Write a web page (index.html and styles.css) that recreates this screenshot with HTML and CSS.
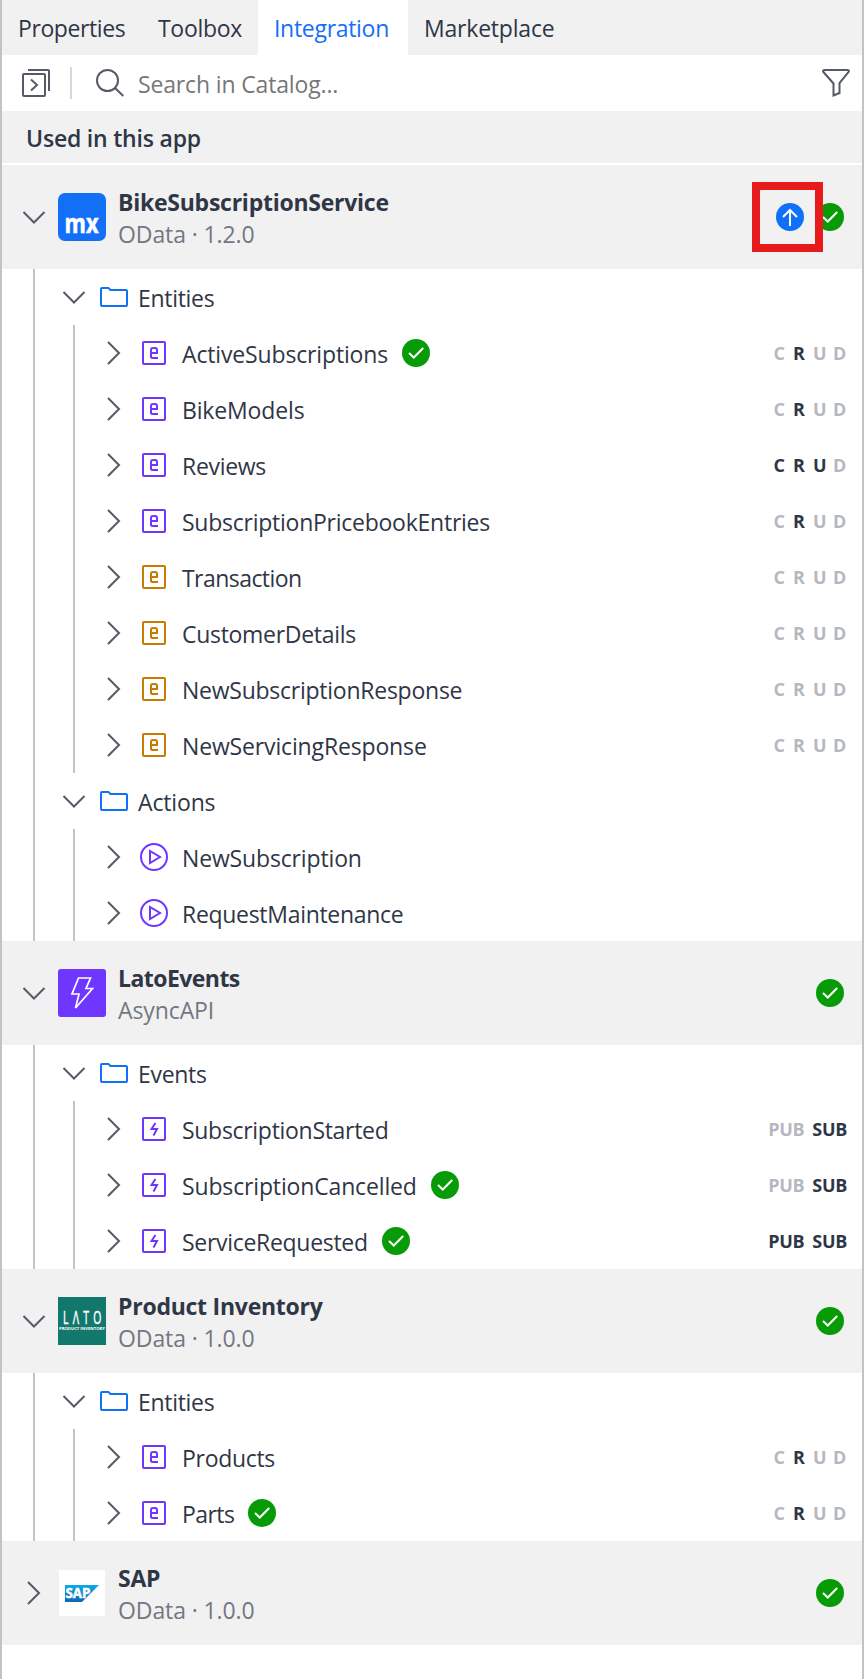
FILE: index.html
```html
<!DOCTYPE html>
<html lang="en">
<head>
<meta charset="utf-8">
<title>Integration</title>
<link rel="stylesheet" href="styles.css">
</head>
<body>
<svg class="defs" aria-hidden="true">
  <symbol id="down" viewBox="0 0 24 28"><path d="M1.500 9 12 19.500 22.500 9"/></symbol>
  <symbol id="right" viewBox="0 0 24 28"><path d="M6 3 17 14 6 25"/></symbol>
  <symbol id="folder" viewBox="0 0 28 28"><path d="M1 6Q1 5 2 5H8.500L10.500 7H26Q27 7 27 8V22Q27 23 26 23H2Q1 23 1 22Z"/></symbol>
  <symbol id="entity" viewBox="0 0 28 28"><rect x="3" y="3" width="22" height="22" rx="1"/><path d="M18 19H12.500Q11 19 11 17.500V11Q11 9 13 9H15Q17 9 17 11V14H11"/></symbol>
  <symbol id="event" viewBox="0 0 28 28"><rect x="3" y="3" width="22" height="22" rx="1"/><path d="M15.500 8 11.500 14H17L13.500 20.500"/></symbol>
  <symbol id="action" viewBox="0 0 28 28"><circle cx="14" cy="14" r="13"/><path d="M10 8V20L20 14Z"/></symbol>
  <symbol id="check" viewBox="0 0 28 28"><circle cx="14" cy="14" r="14" fill="#089b08"/><path d="M7 14 11.800 18.500 21.200 9" fill="none" stroke="#fff" stroke-width="2"/></symbol>
  <symbol id="update" viewBox="0 0 28 28"><circle cx="14" cy="14" r="14" fill="#0f70f8"/><path d="M14 23V7M7 14 14 7 21 14" fill="none" stroke="#fff" stroke-width="2"/></symbol>
</svg>
<div class="panel">
  <nav class="tabs">
    <div class="tab t-properties">Properties</div>
    <div class="tab t-toolbox">Toolbox</div>
    <div class="tab t-integration active">Integration</div>
    <div class="tab t-marketplace">Marketplace</div>
  </nav>
  <div class="toolbar">
    <svg class="i28 line" viewBox="0 0 28 28"><rect x="1" y="5" width="22" height="22" rx="1"/><path d="M6 1H26Q27 1 27 2V22M9 10.500 15 16 9 21.500"/></svg>
    <span class="divider"></span>
    <svg class="i28 line" viewBox="0 0 28 28"><circle cx="11.500" cy="11.500" r="10.500"/><path d="M19 19 27.300 27"/></svg>
    <span class="search">Search in Catalog...</span>
    <svg class="i28 line" viewBox="0 0 28 28"><path d="M2 1H26Q27 1 27 2.500L17.500 14V24L11.500 26.500V14.500L1 2.500Q1 1 2 1Z"/></svg>
  </div>
  <h2 class="section">Used in this app</h2>

  <div class="service">
    <svg class="chev"><use href="#down"/></svg>
    <svg class="logo" viewBox="0 0 48 48"><rect width="48" height="48" rx="7" fill="#146ff8"/><text x="6.500" y="40" font-size="26" font-weight="700" stroke="#fff" stroke-width=".6" textLength="34" lengthAdjust="spacingAndGlyphs">mx</text></svg>
    <div class="info"><div class="name">BikeSubscriptionService</div><div class="kind">OData · 1.2.0</div></div>
    <div class="status"><span class="highlight"><svg class="i28"><use href="#update"/></svg></span><svg class="i28"><use href="#check"/></svg></div>
  </div>
  <div class="branch">
    <div class="row folder"><svg class="chev"><use href="#down"/></svg><svg class="i28 blue"><use href="#folder"/></svg><span class="label">Entities</span></div>
    <div class="items">
      <div class="row"><svg class="chev"><use href="#right"/></svg><svg class="i28 purple"><use href="#entity"/></svg><span class="label wide">ActiveSubscriptions</span><svg class="i28"><use href="#check"/></svg><span class="crud"><i>C</i><b>R</b><i>U</i><i>D</i></span></div>
      <div class="row"><svg class="chev"><use href="#right"/></svg><svg class="i28 purple"><use href="#entity"/></svg><span class="label wide">BikeModels</span><span class="crud"><i>C</i><b>R</b><i>U</i><i>D</i></span></div>
      <div class="row"><svg class="chev"><use href="#right"/></svg><svg class="i28 purple"><use href="#entity"/></svg><span class="label">Reviews</span><span class="crud"><b>C</b><b>R</b><b>U</b><i>D</i></span></div>
      <div class="row"><svg class="chev"><use href="#right"/></svg><svg class="i28 purple"><use href="#entity"/></svg><span class="label loose">SubscriptionPricebookEntries</span><span class="crud"><i>C</i><b>R</b><i>U</i><i>D</i></span></div>
      <div class="row"><svg class="chev"><use href="#right"/></svg><svg class="i28 orange"><use href="#entity"/></svg><span class="label tight">Transaction</span><span class="crud"><i>C</i><i>R</i><i>U</i><i>D</i></span></div>
      <div class="row"><svg class="chev"><use href="#right"/></svg><svg class="i28 orange"><use href="#entity"/></svg><span class="label">CustomerDetails</span><span class="crud"><i>C</i><i>R</i><i>U</i><i>D</i></span></div>
      <div class="row"><svg class="chev"><use href="#right"/></svg><svg class="i28 orange"><use href="#entity"/></svg><span class="label loose">NewSubscriptionResponse</span><span class="crud"><i>C</i><i>R</i><i>U</i><i>D</i></span></div>
      <div class="row"><svg class="chev"><use href="#right"/></svg><svg class="i28 orange"><use href="#entity"/></svg><span class="label wide">NewServicingResponse</span><span class="crud"><i>C</i><i>R</i><i>U</i><i>D</i></span></div>
    </div>
    <div class="row folder"><svg class="chev"><use href="#down"/></svg><svg class="i28 blue"><use href="#folder"/></svg><span class="label wide">Actions</span></div>
    <div class="items">
      <div class="row"><svg class="chev"><use href="#right"/></svg><svg class="i28 purple"><use href="#action"/></svg><span class="label wide">NewSubscription</span></div>
      <div class="row"><svg class="chev"><use href="#right"/></svg><svg class="i28 purple"><use href="#action"/></svg><span class="label">RequestMaintenance</span></div>
    </div>
  </div>

  <div class="service">
    <svg class="chev"><use href="#down"/></svg>
    <svg class="logo" viewBox="0 0 48 48"><rect width="48" height="48" rx="3" fill="#6f36ff"/><path d="M20.500 9H32.500L28 19.500H34.500L17.500 39L21 25H14Z" fill="none" stroke="#fff" stroke-width="1.700"/></svg>
    <div class="info"><div class="name tight">LatoEvents</div><div class="kind">AsyncAPI</div></div>
    <div class="status"><svg class="i28"><use href="#check"/></svg></div>
  </div>
  <div class="branch">
    <div class="row folder"><svg class="chev"><use href="#down"/></svg><svg class="i28 blue"><use href="#folder"/></svg><span class="label">Events</span></div>
    <div class="items">
      <div class="row"><svg class="chev"><use href="#right"/></svg><svg class="i28 purple"><use href="#event"/></svg><span class="label">SubscriptionStarted</span><span class="pubsub"><i>PUB</i><b>SUB</b></span></div>
      <div class="row"><svg class="chev"><use href="#right"/></svg><svg class="i28 purple"><use href="#event"/></svg><span class="label wide">SubscriptionCancelled</span><svg class="i28"><use href="#check"/></svg><span class="pubsub"><i>PUB</i><b>SUB</b></span></div>
      <div class="row"><svg class="chev"><use href="#right"/></svg><svg class="i28 purple"><use href="#event"/></svg><span class="label">ServiceRequested</span><svg class="i28"><use href="#check"/></svg><span class="pubsub"><b>PUB</b><b>SUB</b></span></div>
    </div>
  </div>

  <div class="service">
    <svg class="chev"><use href="#down"/></svg>
    <svg class="logo" viewBox="0 0 48 48"><rect width="48" height="48" fill="#12786d"/><text transform="translate(5 27) scale(.55 1)" font-size="19" stroke="#fff" stroke-width=".5" textLength="70">LΛTO</text><text x="1" y="33.200" font-size="4.200" font-weight="700" textLength="46" lengthAdjust="spacingAndGlyphs">PRODUCT INVENTORY</text></svg>
    <div class="info"><div class="name">Product Inventory</div><div class="kind">OData · 1.0.0</div></div>
    <div class="status"><svg class="i28"><use href="#check"/></svg></div>
  </div>
  <div class="branch">
    <div class="row folder"><svg class="chev"><use href="#down"/></svg><svg class="i28 blue"><use href="#folder"/></svg><span class="label">Entities</span></div>
    <div class="items">
      <div class="row"><svg class="chev"><use href="#right"/></svg><svg class="i28 purple"><use href="#entity"/></svg><span class="label">Products</span><span class="crud"><i>C</i><b>R</b><i>U</i><i>D</i></span></div>
      <div class="row"><svg class="chev"><use href="#right"/></svg><svg class="i28 purple"><use href="#entity"/></svg><span class="label tight">Parts</span><svg class="i28"><use href="#check"/></svg><span class="crud"><i>C</i><b>R</b><i>U</i><i>D</i></span></div>
    </div>
  </div>

  <div class="service">
    <svg class="chev"><use href="#right"/></svg>
    <svg class="logo" viewBox="0 0 48 48"><defs><linearGradient id="sap" x1="0" y1="0" x2="0" y2="1"><stop offset="0" stop-color="#0aabec"/><stop offset="1" stop-color="#0b66b5"/></linearGradient></defs><rect x="1" y="1" width="46" height="46" fill="#fff"/><path d="M7 16H41L24 33H7Z" fill="url(#sap)"/><text x="7.500" y="29.300" font-size="13.500" font-weight="700" stroke="#fff" stroke-width=".5" textLength="25" lengthAdjust="spacingAndGlyphs">SAP</text></svg>
    <div class="info"><div class="name">SAP</div><div class="kind">OData · 1.0.0</div></div>
    <div class="status"><svg class="i28"><use href="#check"/></svg></div>
  </div>
</div>
</body>
</html>
```
FILE: styles.css
```css
* { box-sizing: border-box; }
body { margin: 0; background: #fff; font-family: "Open Sans", "Noto Sans", sans-serif; font-size: 23px; color: #2f3646; letter-spacing: -0.3px; white-space: nowrap; }
.defs { position: absolute; width: 0; height: 0; }
.panel { width: 864px; height: 1679px; border: solid #c2c2ca; border-width: 0 2px; overflow: hidden; }
svg { flex: none; display: block; }
.i28 { width: 28px; height: 28px; }
.chev { width: 24px; height: 28px; fill: none; stroke: #555a68; stroke-width: 2; }
.line { fill: none; stroke: #555a68; stroke-width: 2; }
.blue { fill: none; stroke: #0f70f8; stroke-width: 2; }
.purple { fill: none; stroke: #6f36ff; stroke-width: 2; }
.orange { fill: none; stroke: #c97a00; stroke-width: 2; }

.tabs { display: flex; height: 55px; background: #f1f1f1; line-height: 57px; }
.tab { padding-left: 16px; }
.t-properties { width: 141px; letter-spacing: -0.4px; }
.t-toolbox { width: 115px; padding-left: 15px; }
.t-integration { width: 150px; }
.t-marketplace { letter-spacing: -0.2px; }
.active { background: #fff; color: #146ff8; }

.toolbar { display: flex; align-items: center; height: 56px; padding: 0 12px 0 20px; }
.divider { width: 2px; height: 32px; margin: 0 24px 0 20px; background: #d8d8d8; }
.search { flex: 1; padding: 2px 0 0 14px; color: #777; letter-spacing: -0.15px; }

.section { height: 54px; margin: 0; padding-left: 24px; border-bottom: 2px solid #fff; background: #f1f1f1; line-height: 54px; font-size: 23px; font-weight: 600; letter-spacing: -0.2px; }

.service { display: flex; align-items: center; height: 104px; padding: 0 18px 0 20px; background: #f1f1f1; }
.logo { width: 48px; height: 48px; margin: 0 12px; fill: #fff; letter-spacing: 0; }
.info { padding-top: 2px; line-height: 32px; }
.name { font-weight: 700; letter-spacing: -0.25px; }
.kind { color: #737783; letter-spacing: -0.1px; }
.status { display: flex; align-items: center; margin-left: auto; }
.highlight { position: relative; z-index: 1; padding: 13px 11px 13px 16px; margin-right: -7px; border: 8px solid #e71b1b; }

.branch { margin-left: 31px; border-left: 2px solid #c2c2ca; }
.row { display: flex; align-items: center; gap: 14px; height: 56px; padding: 0 14px 0 27px; }
.items { margin-left: 38px; border-left: 2px solid #c2c2ca; }
.label { padding-top: 2px; }
.folder .label { margin-left: -4px; }
.loose { letter-spacing: -0.25px; }
.wide { letter-spacing: -0.15px; }
.tight { letter-spacing: -0.55px; }
.crud, .pubsub { display: flex; margin-left: auto; padding-bottom: 1px; font-size: 18px; font-weight: 700; letter-spacing: 0; }
.crud > * { width: 20px; }
.crud > :first-child { width: 19.5px; }
.crud > :last-child { width: 16px; }
.crud { margin-right: -1px; }
.pubsub { gap: 8px; letter-spacing: -0.3px; margin-right: 1px; }
i { color: #b5b8c1; font-style: normal; }
b { font-weight: 700; }
```
